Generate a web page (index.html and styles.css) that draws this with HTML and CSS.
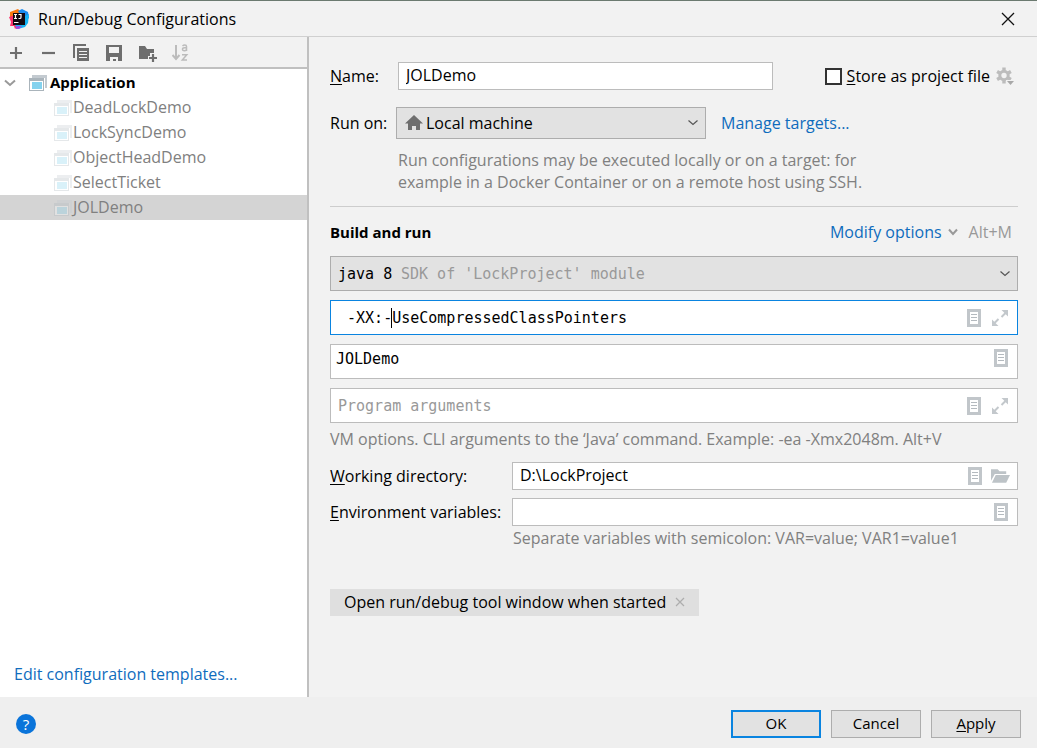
FILE: index.html
```html
<!DOCTYPE html>
<html lang="en">
<head>
<meta charset="utf-8">
<title>Run/Debug Configurations</title>
<link rel="stylesheet" href="styles.css">
</head>
<body>
<svg class="defs" aria-hidden="true">
  <symbol id="app" viewBox="0 0 18 18">
    <path d="M3 1h15v13h-2V4H3z" fill="#c3cad0"/>
    <path d="M0 4h15v13H0z" fill="#aab4bb"/>
    <path d="M1 7h13v9H1z" fill="#fff"/>
    <path d="M3 8h10v7H3z" fill="#84d2ee"/>
  </symbol>
  <symbol id="doc" viewBox="0 0 14 18">
    <path d="M0 0h14v18H0z" fill="#c1c6ca"/>
    <path d="M3 3h8v12H3z" fill="#fff"/>
    <path d="M4 5h6v1H4zM4 8h6v1H4zM4 11h6v1H4z" fill="#b4babf"/>
  </symbol>
  <symbol id="expand" viewBox="0 0 16 16">
    <path d="M9.500 0H16v6.500l-2.300-2.300-3.500 3.500-1.400-1.400 3.500-3.500zM0 9.500l2.300 2.300 3.500-3.500 1.400 1.400-3.500 3.500L6.500 16H0z" fill="#c3c8cc"/>
  </symbol>
  <symbol id="down" viewBox="0 0 12 8">
    <path d="M1.500 1.500 6 5.500l4.500-4" fill="none" stroke="currentColor" stroke-width="1.200"/>
  </symbol>
</svg>

<div class="window">
  <header class="titlebar">
    <svg class="logo" viewBox="0 0 20 20" aria-hidden="true">
      <path d="M1 3 9 0 12 3 5 11 1 10z" fill="#f97a12"/>
      <path d="M0 8l6-2 3 11-3 3-1-3H1l1-4z" fill="#f9316c"/>
      <path d="M9 2l4-2 6 3 1 6-5 4z" fill="#1a8cf0"/>
      <path d="M14 8l6-3-1 9-3 4-7 2-3-3z" fill="#15b4f4"/>
      <path d="M7 17h6l-3 3H7z" fill="#a04be0"/>
      <path d="M4 4h12v12H4z" fill="#120a12"/>
      <path d="M5 5.500h3M6.500 5.500v4M5 9.500h3M9.500 5.500H12v3q0 1-1.300 1H9.500M5 13.500h4.500" fill="none" stroke="#fff" stroke-width="1.200"/>
    </svg>
    <h1 class="title">Run/Debug Configurations</h1>
    <button class="icon-button close" aria-label="Close">
      <svg width="14" height="14" viewBox="0 0 14 14"><path d="M1 1l12 12M13 1 1 13" stroke="#111" stroke-width="1.300"/></svg>
    </button>
  </header>

  <div class="body">
    <aside class="sidebar">
      <div class="toolbar">
        <button class="icon-button" aria-label="Add"><svg width="18" height="18" viewBox="0 0 18 18"><path d="M9 3v12M3 9h12" stroke="#6e6e6e" stroke-width="2.200"/></svg></button>
        <button class="icon-button" aria-label="Remove"><svg width="18" height="18" viewBox="0 0 18 18"><path d="M2 9h13" stroke="#6e6e6e" stroke-width="2.200"/></svg></button>
        <button class="icon-button" aria-label="Copy"><svg width="18" height="18" viewBox="0 0 18 18"><path d="M0 0h13v2H2v12H0z" fill="#6e6e6e"/><path d="M4 4h12v13H4z" fill="#6e6e6e"/><path d="M6 7.500h8M6 10.500h8M6 13.500h8" stroke="#f2f2f2" stroke-width="1.200"/></svg></button>
        <button class="icon-button" aria-label="Save"><svg width="18" height="18" viewBox="0 0 18 18"><path d="M0 1h16v16H0z" fill="#6e6e6e"/><path d="M3 3h10v6H3zM4 13h8v4h-2v-2H7v2H4z" fill="#f2f2f2"/></svg></button>
        <button class="icon-button" aria-label="New folder"><svg width="18" height="18" viewBox="0 0 18 18"><path d="M0 2h6l2 3h7v4h-4v3h-2v3H0z" fill="#6e6e6e"/><path d="M14 10v8M10 14h8" stroke="#6e6e6e" stroke-width="2.200"/></svg></button>
        <button class="icon-button" aria-label="Sort" disabled><svg width="18" height="18" viewBox="0 0 18 18"><path d="M4 1v14M.5 11 4 15l3.500-4" fill="none" stroke="#bcbcbc" stroke-width="2"/><path d="M10.500 2q1-1 2.300-1 1.700 0 1.700 1.500V7M14.500 3.800h-2q-2 0-2 1.500T12.500 6.700q2 0 2-1.500M10 10.700h4.800L10.300 16H15" fill="none" stroke="#bcbcbc" stroke-width="1.500"/></svg></button>
      </div>
      <ul class="tree">
        <li class="node group">
          <svg class="twisty" width="12" height="8"><path d="M1 1.500 6 6l5-4.500" fill="none" stroke="#999" stroke-width="2"/></svg>
          <svg class="app-icon"><use href="#app"/></svg><span>Application</span>
        </li>
        <li class="node leaf"><svg class="app-icon"><use href="#app"/></svg><span>DeadLockDemo</span></li>
        <li class="node leaf"><svg class="app-icon"><use href="#app"/></svg><span>LockSyncDemo</span></li>
        <li class="node leaf"><svg class="app-icon"><use href="#app"/></svg><span>ObjectHeadDemo</span></li>
        <li class="node leaf"><svg class="app-icon"><use href="#app"/></svg><span>SelectTicket</span></li>
        <li class="node leaf selected"><svg class="app-icon"><use href="#app"/></svg><span>JOLDemo</span></li>
      </ul>
      <a class="link templates" href="#">Edit configuration templates...</a>
    </aside>

    <main class="form">
      <div class="row name-row">
        <label class="short-label" for="name"><u>N</u>ame:</label>
        <input class="field name" id="name" value="JOLDemo">
        <div class="store">
          <input class="check" type="checkbox" id="store">
          <label for="store"><u>S</u>tore as project file</label>
          <button class="icon-button gear" aria-label="Storage settings"><svg width="18" height="18" viewBox="0 0 18 18"><g stroke="#bcbcbc" fill="none"><circle cx="8" cy="8.500" r="4.200" stroke-width="3"/><path d="M8 .5v3M8 13.500v3M1.100 4.500l2.600 1.500M12.300 11l2.600 1.500M1.100 12.500 3.700 11M12.300 6l2.600-1.500" stroke-width="3.400"/></g><path d="M10 13h8v5h-8z" fill="#f2f2f2"/><path d="M11 14h7l-3.500 4z" fill="#a8a8a8"/></svg></button>
        </div>
      </div>

      <div class="row target-row">
        <label class="short-label" for="target">Run on:</label>
        <div class="stack target">
          <select class="field combo" id="target"><option>Local machine</option></select>
          <svg class="home" width="18" height="16" viewBox="0 0 18 16"><path d="M9 0l9 8.500h-3V15h-4v-4H7v4H3V8.500H0z" fill="#6e6e6e"/></svg>
          <svg class="arrow"><use href="#down"/></svg>
        </div>
        <a class="link" href="#">Manage targets...</a>
      </div>
      <p class="hint target-hint">Run configurations may be executed locally or on a target: for<br>example in a Docker Container or on a remote host using SSH.</p>

      <hr class="rule">

      <div class="row section">
        <h2 class="heading">Build and run</h2>
        <a class="link modify" href="#">Modify options <svg class="mini" width="10" height="8"><path d="M1 1.500 5 6l4-4.500" fill="none" stroke="#999" stroke-width="2"/></svg></a>
        <span class="shortcut">Alt+M</span>
      </div>

      <div class="options">
        <div class="stack">
          <select class="field combo mono tall" aria-label="JDK"><option>java 8</option></select>
          <span class="sdk mono">SDK of 'LockProject' module</span>
          <svg class="arrow"><use href="#down"/></svg>
        </div>
        <div class="stack">
          <input class="field mono tall focused" aria-label="VM options" value=" -XX:-UseCompressedClassPointers">
          <span class="caret"></span>
          <span class="tools"><svg class="doc"><use href="#doc"/></svg><svg class="expand"><use href="#expand"/></svg></span>
        </div>
        <div class="stack">
          <input class="field mono tall main-class" aria-label="Main class" value="JOLDemo">
          <span class="tools raised"><svg class="doc"><use href="#doc"/></svg></span>
        </div>
        <div class="stack">
          <input class="field mono tall" aria-label="Program arguments" placeholder="Program arguments">
          <span class="tools"><svg class="doc"><use href="#doc"/></svg><svg class="expand"><use href="#expand"/></svg></span>
        </div>
      </div>
      <p class="hint vm-hint">VM options. CLI arguments to the ‘Java’ command. Example: -ea -Xmx2048m. Alt+V</p>

      <div class="grid">
        <label for="dir"><u>W</u>orking directory:</label>
        <div class="stack">
          <input class="field" id="dir" value="D:\LockProject">
          <span class="tools folder-tools"><svg class="doc"><use href="#doc"/></svg><svg width="19" height="14" viewBox="0 0 20 14"><path d="M0 0h7l2 2h7v3H4L0 12z" fill="#bdc3c7"/><path d="M5 6h15l-4 8H1z" fill="#bdc3c7"/></svg></span>
        </div>
        <label for="env"><u>E</u>nvironment variables:</label>
        <div class="stack">
          <input class="field" id="env">
          <span class="tools"><svg class="doc"><use href="#doc"/></svg></span>
        </div>
      </div>
      <p class="hint env-hint">Separate variables with semicolon: VAR=value; VAR1=value1</p>

      <div class="chip">Open run/debug tool window when started
        <button class="icon-button" aria-label="Remove option"><svg width="10" height="10" viewBox="0 0 10 10"><path d="M1 1l8 8M9 1 1 9" stroke="#adadad" stroke-width="1.200"/></svg></button>
      </div>
    </main>
  </div>

  <footer class="footer">
    <button class="help" aria-label="Help">?</button>
    <button class="button primary">OK</button>
    <button class="button">Cancel</button>
    <button class="button"><u>A</u>pply</button>
  </footer>
</div>
</body>
</html>
```
FILE: styles.css
```css
* { box-sizing: border-box; }

body {
  margin: 0;
  background: #f2f2f2;
  color: #000;
  font: 16px/22px "Open Sans", "Noto Sans", sans-serif;
}

button, input, select { font: inherit; color: inherit; }
h1, h2, p, ul { margin: 0; padding: 0; }
u { text-underline-offset: 2px; }
svg { flex: none; display: block; }

.defs { position: absolute; width: 0; height: 0; }

.window {
  display: flex;
  flex-direction: column;
  min-height: 100vh;
  border-top: 1px solid #6b7a70;
}

.titlebar {
  display: flex;
  align-items: center;
  gap: 9px;
  height: 36px;
  padding: 0 22px 0 9px;
  border-bottom: 1px solid #d0d0d0;
}
.logo { width: 20px; height: 20px; }
.title { flex: 1; font-size: 16px; font-weight: 400; }

.icon-button {
  display: flex;
  padding: 0;
  border: 0;
  background: none;
}

.body { flex: 1; display: flex; }

.sidebar {
  flex: 0 0 309px;
  display: flex;
  flex-direction: column;
  border-right: 2px solid #c0c0c0;
  background: #fff;
}
.toolbar {
  display: flex;
  align-items: center;
  gap: 15px;
  height: 32px;
  padding: 1px 0 0 7px;
  border-bottom: 2px solid #c0c0c0;
  background: #f2f2f2;
}
.tree { flex: 1; list-style: none; padding-top: 1px; }
.node { display: flex; align-items: center; height: 25px; }
.node span { padding-bottom: 2px; }
.app-icon { width: 18px; height: 18px; }
.group { padding-left: 4px; gap: 3px; font-size: 15px; font-weight: 700; }
.twisty { margin-right: 10px; }
.leaf { padding-left: 54px; gap: 1px; color: #808080; }
.leaf .app-icon { opacity: 0.3; }
.selected { background: #d4d4d4; }
.link { color: #0f6cbd; text-decoration: none; }
.templates { padding: 0 14px 12px; }

.form { flex: 1; min-width: 0; padding: 25px 19px 20px 21px; }
.row { display: flex; align-items: center; }

.field {
  width: 100%;
  min-width: 0;
  height: 28px;
  padding: 0 7px 2px;
  border: 1px solid #bcbcbc;
  border-radius: 0;
  outline: 0;
  background: #fff;
}
.field::placeholder { color: #999; opacity: 1; }
.short-label { flex: 0 0 66px; }
.name-row .short-label { flex-basis: 68px; }
.name { flex: 1; }
.store { display: flex; align-items: center; margin: 0 4px 0 52px; }
.check {
  appearance: none;
  width: 17px;
  height: 17px;
  margin: 0 5px 0 0;
  border: 2px solid #333;
  background: #fff;
}
.gear { margin-left: 6px; }

.stack { display: grid; align-items: center; }
.stack > * { grid-area: 1 / 1; }
.combo {
  appearance: none;
  border: 1px solid #adadad;
  background: #e2e2e2;
}
.arrow { width: 12px; height: 8px; margin-right: 7px; justify-self: end; color: #555; pointer-events: none; }
.target-row { margin-top: 17px; }
.target { flex: 0 1 310px; margin-right: 15px; }
.target .combo { height: 32px; padding: 0 29px; }
.home { margin-left: 9px; pointer-events: none; }

.hint { color: #808080; }
.target-hint { margin: 10px 0 13px 68px; }
.rule { height: 1px; margin: 0; border: 0; background: #cdcdcd; }

.section { margin: 14px 6px 13px 0; }
.heading { flex: 1; font-size: 15px; font-weight: 700; }
.modify { display: flex; align-items: center; gap: 6px; }
.shortcut { margin-left: 11px; color: #999; }

.options { display: grid; gap: 9px; }
.mono { font-family: "DejaVu Sans Mono", monospace; font-size: 15px; }
.tall { height: 35px; padding: 0 7px; }
.combo.tall { padding: 0 7px; }
.sdk { margin-left: 71px; color: #999; pointer-events: none; }
.focused { border-color: #0a84e0; }
.caret { width: 1px; height: 20px; margin-left: 61px; background: #000; }
.main-class { padding: 0 5px 6px; }
.tools { display: flex; align-items: center; gap: 11px; justify-self: end; margin-right: 10px; }
.raised { margin-bottom: 8px; }
.doc { width: 14px; height: 18px; }
.expand { width: 16px; height: 16px; }
.folder-tools { gap: 9px; margin-right: 8px; }
.vm-hint { margin-top: 5px; }

.grid {
  display: grid;
  grid-template-columns: 182px 1fr;
  align-items: center;
  row-gap: 8px;
  margin-top: 12px;
}
.env-hint { margin: 1px 0 0 183px; }

.chip {
  display: inline-flex;
  align-items: center;
  gap: 9px;
  height: 27px;
  margin-top: 40px;
  padding: 0 14px 2px;
  background: #dfdfdf;
}

.footer {
  display: flex;
  align-items: center;
  gap: 10px;
  height: 51px;
  padding: 2px 16px 0;
  background: #efefef;
}
.help {
  width: 20px;
  height: 20px;
  margin-right: auto;
  padding: 0;
  border: 0;
  border-radius: 50%;
  background: #0a74da;
  color: #fff;
  font-size: 15px;
  line-height: 20px;
}
.button {
  width: 90px;
  height: 28px;
  padding: 0 0 2px;
  border: 1px solid #adadad;
  background: #e2e2e2;
  font-size: 15px;
}
.primary { border: 2px solid #0a84e0; }
```
